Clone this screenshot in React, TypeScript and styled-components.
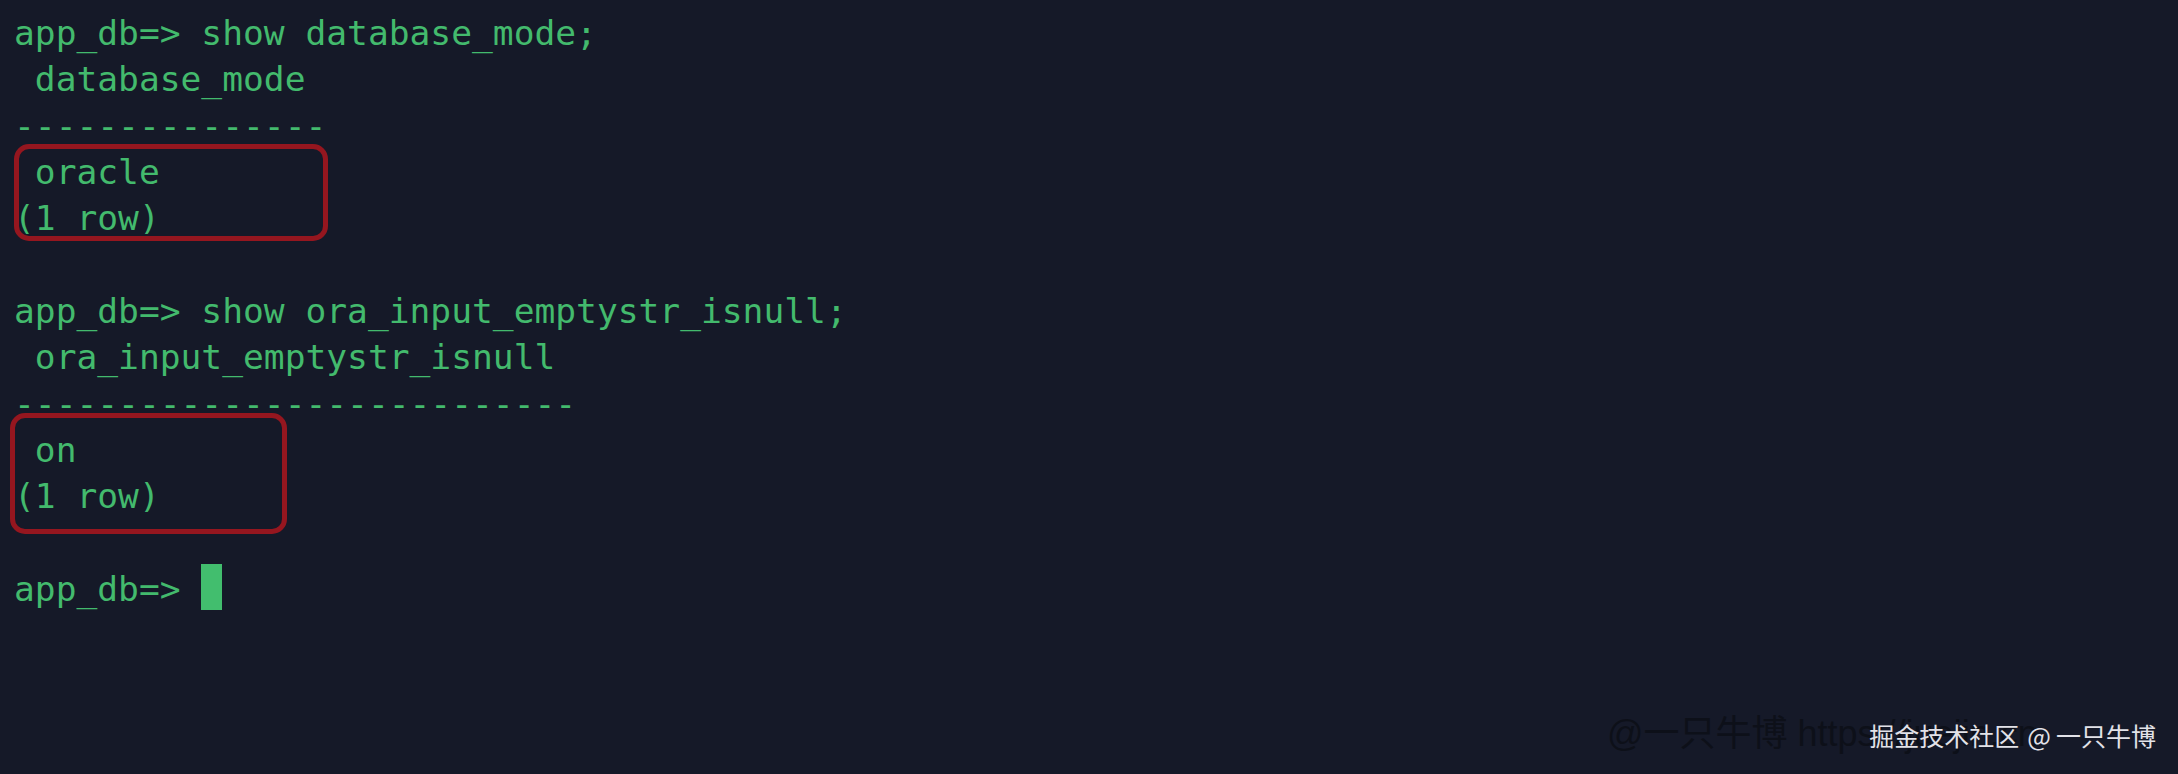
import React from "react";
import styled, { createGlobalStyle } from "styled-components";

const Global = createGlobalStyle`
  html, body { margin: 0; padding: 0; background: #151928; }
  body { width: 2178px; height: 774px; overflow: hidden; }
`;

const Screen = styled.div`
  position: relative;
  width: 2178px;
  height: 774px;
  background: #151928;
  overflow: hidden;
`;

const Terminal = styled.div`
  display: flex;
  flex-direction: column;
  padding: 10px 0 0 14px;
  font-family: "DejaVu Sans Mono", "Liberation Mono", monospace;
  font-size: 34.6px;
  line-height: 46.33px;
  color: #43ba6d;
  white-space: pre;
`;

const Line = styled.div`
  height: 46.33px;
  display: flex;
  align-items: flex-start;
`;

const Cursor = styled.span`
  display: inline-block;
  width: 21px;
  height: 46px;
  margin-top: -2px;
  background: #42be6e;
`;

const Highlight = styled.div<{ $left: number; $width: number; $top: number; $bottom: number }>`
  position: relative;
  &::after {
    content: "";
    position: absolute;
    left: ${(p) => p.$left}px;
    width: ${(p) => p.$width}px;
    top: ${(p) => p.$top}px;
    bottom: ${(p) => p.$bottom}px;
    box-sizing: border-box;
    border: 5px solid #95161f;
    border-radius: 15px;
    pointer-events: none;
  }
`;

const Watermark = styled.div`
  position: absolute;
  left: 1607px;
  top: 712px;
  font-family: "Liberation Sans", "Noto Sans CJK SC", sans-serif;
  font-size: 36px;
  line-height: 44px;
  color: #0d1019;
  white-space: nowrap;
`;

const Badge = styled.div`
  position: absolute;
  right: 22px;
  top: 717px;
  font-family: "Noto Sans CJK SC", "Noto Sans", sans-serif;
  font-size: 25px;
  line-height: 36px;
  color: #e2e2e8;
  white-space: nowrap;
`;

const Sp = styled.span`
  margin: 0 5px 0 8px;
`;

export default function App() {
  return (
    <Screen>
      <Global />
      <Terminal>
        <Line>app_db=&gt; show database_mode;</Line>
        <Line> database_mode</Line>
        <Line>---------------</Line>
        <Highlight $left={0} $width={314} $top={-5} $bottom={1}>
          <Line> oracle</Line>
          <Line>(1 row)</Line>
        </Highlight>
        <Line> </Line>
        <Line>app_db=&gt; show ora_input_emptystr_isnull;</Line>
        <Line> ora_input_emptystr_isnull</Line>
        <Line>---------------------------</Line>
        <Highlight $left={-4} $width={277} $top={-14} $bottom={-14}>
          <Line> on</Line>
          <Line>(1 row)</Line>
        </Highlight>
        <Line> </Line>
        <Line>
          app_db=&gt; <Cursor />
        </Line>
      </Terminal>
      <Watermark>@一只牛博 https://juejin.cn</Watermark>
      <Badge>
        掘金技术社区<Sp>@</Sp>一只牛博
      </Badge>
    </Screen>
  );
}
